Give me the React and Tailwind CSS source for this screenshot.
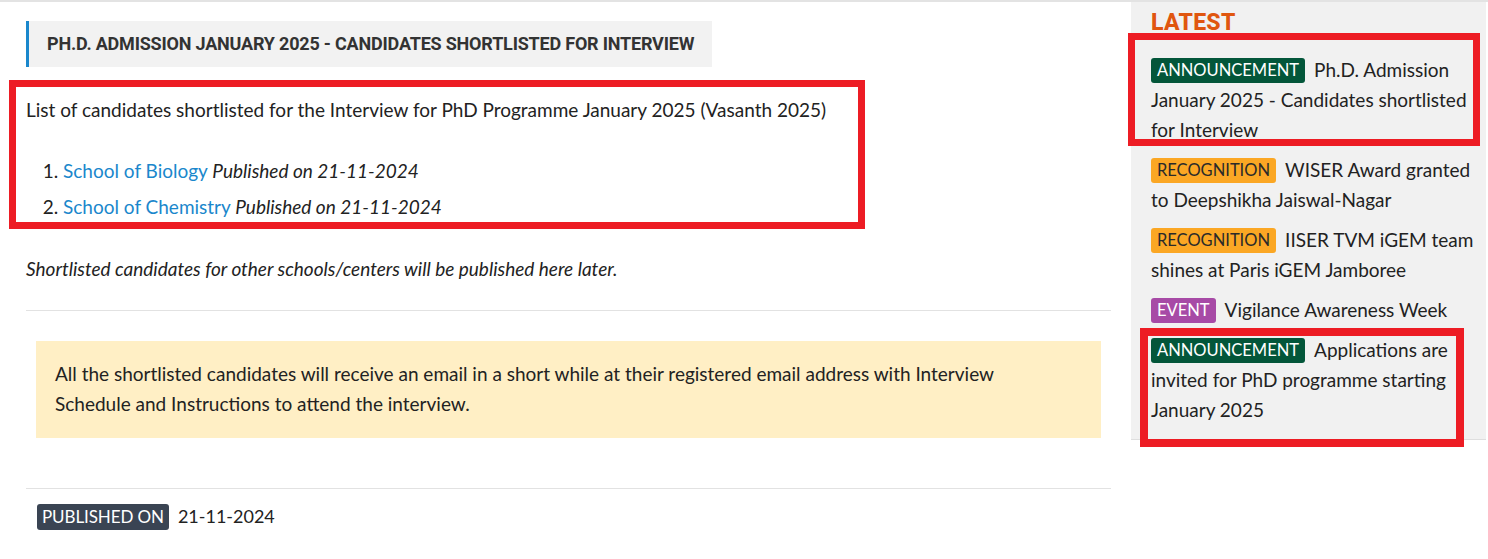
import React from 'react';

const body = { fontFamily: 'Lato, "Open Sans", sans-serif' };

const Badge = ({ kind, children }) => {
  const styles = {
    announcement: 'bg-[#03563a] text-white',
    recognition: 'bg-[#fba724] text-[#2a2a2a]',
    event: 'bg-[#a74aa6] text-white',
  };
  return (
    <span className={`${styles[kind]} inline-block rounded-[3px] px-[6px] mr-[9px] text-[16.5px] leading-[25px] align-[1px]`}>
      {children}
    </span>
  );
};

const latest = [
  { kind: 'announcement', tag: 'ANNOUNCEMENT', text: 'Ph.D. Admission January 2025 - Candidates shortlisted for Interview' },
  { kind: 'recognition', tag: 'RECOGNITION', text: 'WISER Award granted to Deepshikha Jaiswal-Nagar' },
  { kind: 'recognition', tag: 'RECOGNITION', text: 'IISER TVM iGEM team shines at Paris iGEM Jamboree' },
  { kind: 'event', tag: 'EVENT', text: 'Vigilance Awareness Week' },
  { kind: 'announcement', tag: 'ANNOUNCEMENT', text: 'Applications are invited for PhD programme starting January 2025' },
];

export default function App() {
  return (
    <div className="relative w-[1488px] h-[559px] bg-white border-t-2 border-[#e3e3e3] text-[#222] overflow-hidden" style={body}>
      <div className="flex gap-[20px] pl-[26px]">
        {/* Main column */}
        <main className="w-[1085px] shrink-0 pt-[19px]">
          <div className="inline-block bg-[#f2f2f2] border-l-[3px] border-[#1a87cc] pl-[18px] pr-[18px] h-[46px] leading-[46px]">
            <h1 className="text-[18px] font-bold uppercase text-[#333] tracking-[-0.2px]" style={{ fontFamily: 'Roboto, sans-serif' }}>
              Ph.D. Admission January 2025 - Candidates Shortlisted for Interview
            </h1>
          </div>

          <div className="relative">
            <p className="mt-[28px] text-[19px] leading-[30px]">
              List of candidates shortlisted for the Interview for PhD Programme January 2025 (Vasanth 2025)
            </p>
            <ol className="list-decimal pl-[37px] mt-[28px] text-[19px] leading-[36px]">
              <li><a className="text-[#1a87cc]">School of Biology</a> <em>Published on 21-11-2024</em></li>
              <li><a className="text-[#1a87cc]">School of Chemistry</a> <em>Published on 21-11-2024</em></li>
            </ol>
            <div className="absolute left-[-17px] top-[-15px] w-[856px] h-[149px] border-[7px] border-[#ed1c24]" />
          </div>

          <p className="mt-[29px] text-[19px] leading-[30px] italic">
            Shortlisted candidates for other schools/centers will be published here later.
          </p>

          <hr className="mt-[26px] border-t border-[#e2e2e2]" />

          <div className="mx-[10px] mt-[30px] bg-[#ffefc5] px-[19px] pt-[18px] pb-[19px] text-[19px] leading-[30px]">
            All the shortlisted candidates will receive an email in a short while at their registered email address with Interview
            <br />
            Schedule and Instructions to attend the interview.
          </div>

          <hr className="mt-[50px] border-t border-[#e2e2e2]" />

          <div className="mt-[14px] ml-[11px] flex items-center gap-[9px]">
            <span className="bg-[#3a4453] text-white rounded-[3px] px-[5px] h-[26px] leading-[26px] text-[17px] tracking-[-0.1px]">PUBLISHED ON</span>
            <span className="text-[18px]">21-11-2024</span>
          </div>
        </main>

        {/* Sidebar */}
        <aside className="relative w-[355px] shrink-0 bg-[#f1f1f1] border-b border-[#dedede] h-[438px] pl-[20px] pr-[12px] pt-[6px]">
          <h2 className="text-[23px] font-extrabold text-[#e0560f] leading-[30px] tracking-[0.3px]" style={{ fontFamily: 'Roboto, sans-serif' }}>LATEST</h2>
          <ul className="mt-[17px] flex flex-col gap-[10px]">
            {latest.map((item, i) => (
              <li key={i} className="text-[19px] leading-[30px] text-[#222]">
                <Badge kind={item.kind}>{item.tag}</Badge>
                {item.text}
              </li>
            ))}
          </ul>
          <div className="absolute left-[-3px] top-[31px] w-[352px] h-[113px] border-[7px] border-[#ed1c24]" />
          <div className="absolute left-[9px] top-[326px] w-[324px] h-[119px] border-[8px] border-[#ed1c24]" />
        </aside>
      </div>
    </div>
  );
}
